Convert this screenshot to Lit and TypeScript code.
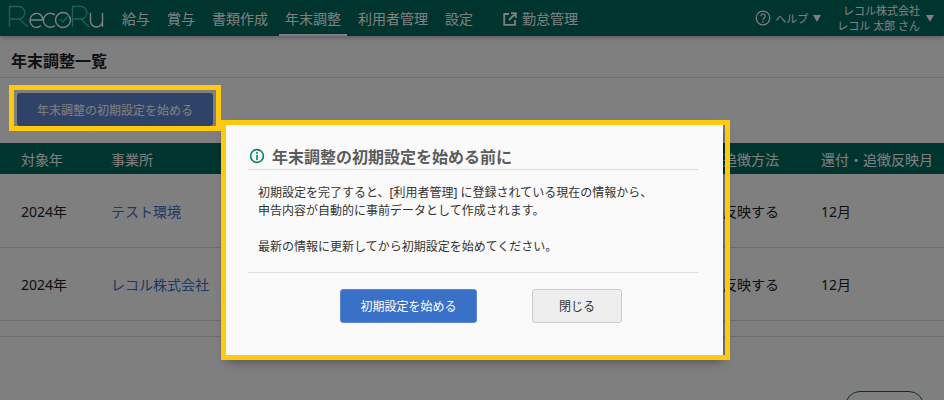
import { LitElement, html, css } from "lit";
import { customElement } from "lit/decorators.js";

const rows = [
  { year: "2024年", office: "テスト環境" },
  { year: "2024年", office: "レコル株式会社" },
];

@customElement("app-root")
export class AppRoot extends LitElement {
  static styles = css`
    :host {
      display: block;
      position: relative;
      width: 944px;
      height: 400px;
      overflow: hidden;
      background: #fff;
      font-family: "Noto Sans", "Noto Sans CJK JP", sans-serif;
      color: #222;
    }
    .header {
      height: 36px;
      background: #006b5f;
      display: flex;
      align-items: stretch;
      color: #fff;
      box-shadow: 0 2px 4px rgba(0, 0, 0, 0.25);
      position: relative;
    }
    .logo { width: 106px; height: 36px; margin-left: 8px; flex: none; display: block; }
    .nav { display: flex; gap: 5px; margin-left: 2px; font-size: 14px; }
    .nav a { padding: 0 6px; display: flex; align-items: center; height: 36px; box-sizing: border-box; border-bottom: 2px solid transparent; padding-top: 3px; line-height: 1; }
    .nav a.on { border-bottom-color: #fff; }
    .nav a.ext { margin-left: 13px; gap: 5px; }
    .spacer { flex: 1; }
    .help { display: flex; align-items: center; gap: 4px; font-size: 11px; margin-right: 16px; }
    .tri { width: 0; height: 0; border-left: 4.5px solid transparent; border-right: 4.5px solid transparent; border-top: 7px solid #fff; margin-top: 1px; }
    .help .tri { margin-left: 1px; }
    .user { display: flex; align-items: center; gap: 6px; margin-right: 10px; font-size: 11px; }
    .user div { text-align: right; line-height: 15px; white-space: nowrap; }
    .title { height: 42px; box-sizing: border-box; border-bottom: 1px solid #ddd; padding: 13px 0 0 11px; font-size: 16px; font-weight: 700; line-height: 24px; }
    .actions { padding: 15px 0 0 17px; height: 65px; box-sizing: border-box; }
    .start { display: block; width: 196px; height: 33px; border: 0; border-radius: 3px; background: #5f86d0; color: #fff; font: inherit; font-size: 12px; padding: 0; }
    .table { display: grid; grid-template-columns: 111px 612px 98px 1fr; grid-template-rows: 31px 74px 73px; }
    .th { background: #006b5f; color: #fff; display: flex; align-items: center; font-size: 14px; white-space: nowrap; }
    .td { display: flex; align-items: center; font-size: 14px; border-bottom: 1px solid #ddd; white-space: nowrap; }
    .p { padding-left: 21px; }
    .link { color: #3a71c8; }
    .foot { height: 15px; border-bottom: 1px solid #ddd; }
    .pager { position: absolute; left: 845px; top: 391px; width: 79px; height: 30px; border: 1px solid #006b5f; border-radius: 15px; box-sizing: border-box; }
    .overlay { position: absolute; inset: 0; background: rgba(0, 0, 0, 0.5); }
    .modal { position: absolute; left: 226px; top: 125px; width: 497px; height: 232px; background: #fafafa; box-shadow: 0 4px 10px rgba(0, 0, 0, 0.4); padding: 0 25px 0 22px; box-sizing: border-box; }
    .mt { display: flex; align-items: center; gap: 7px; height: 45px; padding: 18px 0 0 1px; box-sizing: border-box; border-bottom: 1px solid #ddd; font-size: 16px; font-weight: 700; color: #5c5c5c; white-space: nowrap; }
    .mb { font-size: 12px; line-height: 18px; color: #333; padding: 14px 0 0 10px; height: 103px; box-sizing: border-box; border-bottom: 1px solid #ddd; margin: 0; }
    .mf { display: flex; gap: 55px; padding: 16px 0 0 92px; }
    .b { height: 34px; border-radius: 3px; font: inherit; font-size: 12px; padding: 0; box-sizing: border-box; }
    .b1 { width: 137px; background: #3a71c8; color: #fff; border: 1px solid #5f86d0; }
    .b2 { width: 90px; background: #eee; color: #333; border: 1px solid #ccc; }
    .hl { position: absolute; box-sizing: border-box; border: 5px solid #ffc90f; pointer-events: none; }
    .hl1 { left: 9px; top: 85px; width: 212px; height: 46px; }
    .hl2 { left: 221px; top: 120px; width: 509px; height: 240px; }
  `;

  render() {
    return html`
      <div class="header">
        <svg class="logo" viewBox="0 0 106 36" fill="none" stroke-width="1.4">
          <path d="M1.5 27V6.5h9a6 6 0 0 1 0 12.5H1.5M11 19l9 8" stroke="#3cc0a8"></path>
          <path d="M22.5 20h12.5a6.5 7 0 1 0-2 5.5" stroke="#fff"></path>
          <path d="M47 15a7 7 0 1 0 0 10.5" stroke="#fff"></path>
          <circle cx="55" cy="20" r="7.5" stroke="#fff"></circle>
          <path d="M52 19l3 3 6-7" stroke="#3cc0a8"></path>
          <path d="M64.5 27V6.5h8a6 6 0 0 1 0 12.5h-8M73 19l8 8" stroke="#3cc0a8"></path>
          <path d="M82.5 13v8a6 6 0 0 0 12 0v-8v14" stroke="#fff"></path>
        </svg>
        <nav class="nav">
          <a>給与</a><a>賞与</a><a>書類作成</a><a class="on">年末調整</a><a>利用者管理</a><a>設定</a>
          <a class="ext">
            <svg width="14" height="14" viewBox="0 0 14 14" fill="none" stroke="#fff" stroke-width="1.8">
              <path d="M6 2H1.2v10.8H12V8M8 1.2h4.8V6M12.5 1.5L6 8"></path>
            </svg>
            勤怠管理
          </a>
        </nav>
        <div class="spacer"></div>
        <div class="help">
          <svg width="16" height="16" viewBox="0 0 16 16" fill="none" stroke="#fff" stroke-width="1.2">
            <circle cx="8" cy="8" r="6.8"></circle>
            <path d="M5.8 6.2a2.2 2.2 0 1 1 3.4 1.8C8.4 8.6 8 9 8 10M8 11v1.4"></path>
          </svg>
          <span>ヘルプ</span><span class="tri"></span>
        </div>
        <div class="user">
          <div>レコル株式会社<br />レコル 太郎 さん</div>
          <span class="tri"></span>
        </div>
      </div>
      <div class="title">年末調整一覧</div>
      <div class="actions"><button class="start">年末調整の初期設定を始める</button></div>
      <div class="table">
        <div class="th p">対象年</div><div class="th">事業所</div><div class="th">追徴方法</div><div class="th">還付・追徴反映月</div>
        ${rows.map(
          (r) => html`
            <div class="td p">${r.year}</div>
            <div class="td link">${r.office}</div>
            <div class="td">反映する</div>
            <div class="td">12月</div>
          `
        )}
      </div>
      <div class="foot"></div>
      <div class="pager"></div>
      <div class="overlay"></div>
      <div class="modal">
        <div class="mt">
          <svg width="16" height="16" viewBox="0 0 16 16" fill="none" stroke="#00806f" stroke-width="1.6">
            <circle cx="8" cy="8" r="6.4"></circle>
            <path d="M8 7v5M8 4v1.8"></path>
          </svg>
          年末調整の初期設定を始める前に
        </div>
        <p class="mb">
          初期設定を完了すると、[利用者管理] に登録されている現在の情報から、<br />
          申告内容が自動的に事前データとして作成されます。<br /><br />
          最新の情報に更新してから初期設定を始めてください。
        </p>
        <div class="mf">
          <button class="b b1">初期設定を始める</button>
          <button class="b b2">閉じる</button>
        </div>
      </div>
      <div class="hl hl1"></div>
      <div class="hl hl2"></div>
    `;
  }
}
